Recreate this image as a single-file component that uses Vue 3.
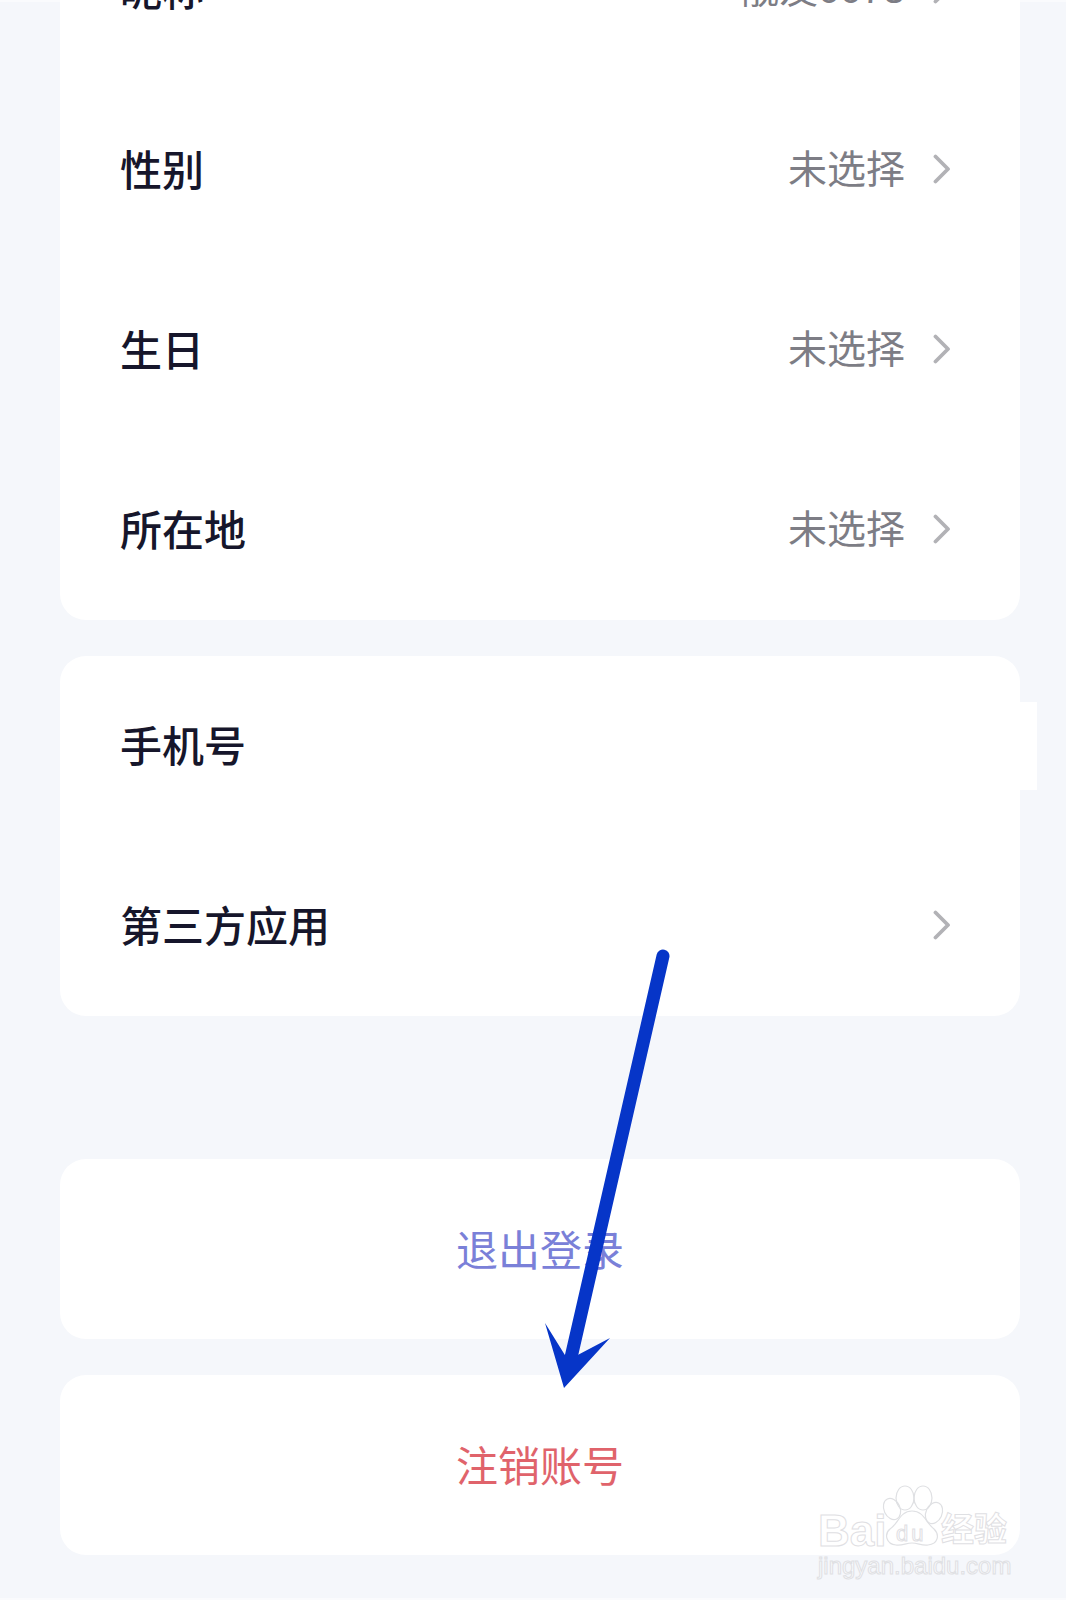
<template>
  <div class="page">
    <section class="card card--first">
      <div v-for="row in profileRows" :key="row.label" class="row">
        <span class="row-label">{{ row.label }}</span>
        <span class="row-value">{{ row.value }}</span>
        <svg class="chevron" width="18" height="30" viewBox="0 0 18 30">
          <path d="M2.5 2.5 15 15 2.5 27.5" />
        </svg>
      </div>
    </section>

    <section class="card card--accounts">
      <div class="row">
        <span class="row-label">手机号</span>
      </div>
      <div class="row">
        <span class="row-label">第三方应用</span>
        <svg class="chevron" width="18" height="30" viewBox="0 0 18 30">
          <path d="M2.5 2.5 15 15 2.5 27.5" />
        </svg>
      </div>
      <div class="tab"></div>
    </section>

    <section class="card card--action card--logout">
      <span class="action logout">退出登录</span>
    </section>
    <section class="card card--action">
      <span class="action cancel">注销账号</span>
    </section>

    <svg class="arrow" width="1066" height="1600" viewBox="0 0 1066 1600">
      <path d="M663 956 570 1362" class="arrow-line" />
      <path d="M545 1323 564 1388 610 1338 572 1358 568 1360Z" class="arrow-head" />
    </svg>

    <div class="watermark">
      <svg class="paw" width="200" height="70" viewBox="0 0 200 70">
        <ellipse cx="74" cy="25" rx="8" ry="11" transform="rotate(-25 74 25)" />
        <ellipse cx="87" cy="14" rx="9" ry="12" />
        <ellipse cx="105" cy="14" rx="9" ry="12" />
        <ellipse cx="116" cy="29" rx="8" ry="11" transform="rotate(25 116 29)" />
        <path d="M78 61C68 60 66 50 72 45 80 40 82 27 94 27 106 27 108 39 116 45 122 51 120 60 110 61 104 62 100 59 94 59 88 59 84 62 78 61Z" />
      </svg>
      <div class="wm-bai">Bai</div>
      <div class="wm-du">du</div>
      <div class="wm-jy">经验</div>
      <div class="wm-url">jingyan.baidu.com</div>
    </div>
  </div>
</template>

<script setup>
const profileRows = [
  { label: '昵称', value: '靓友0073' },
  { label: '性别', value: '未选择' },
  { label: '生日', value: '未选择' },
  { label: '所在地', value: '未选择' }
];
</script>

<style>
html, body { margin: 0; background: #f5f7fb; }
</style>

<style scoped>
.page {
  position: relative;
  width: 1066px;
  height: 1600px;
  overflow: hidden;
  background: #f5f7fb;
  box-shadow: inset 0 2px 0 #fafbfd, inset 0 -2px 0 #fafbfd;
  padding: 0 46px 0 60px;
  box-sizing: border-box;
  font-family: "Liberation Sans", "Noto Sans CJK SC", sans-serif;
}
.card {
  position: relative;
  background: #fff;
  border-radius: 26px;
  margin-bottom: 36px;
}
.card--first { margin-top: -100px; }
.card--accounts { margin-bottom: 143px; }
.card--logout { margin-bottom: 36px; }
.card--action {
  height: 180px;
  display: flex;
  align-items: center;
  justify-content: center;
  padding-bottom: 4px;
  box-sizing: border-box;
}

.row {
  height: 180px;
  display: flex;
  align-items: center;
  padding: 0 68px 0 60px;
  box-sizing: border-box;
}
.row-label {
  flex: 1;
  font-size: 42px;
  font-weight: 500;
  color: #16162b;
  margin-top: -6px;
}
.row-value {
  font-size: 39px;
  color: #7d7d85;
  margin-right: 29px;
  margin-top: -8px;
}
.chevron {
  flex: none;
  margin-top: -3px;
  margin-left: -1px;
  margin-right: 1px;
}
.chevron path {
  fill: none;
  stroke: #b2b2b6;
  stroke-width: 3.8;
  stroke-linecap: round;
  stroke-linejoin: round;
}

.tab {
  position: absolute;
  right: -17px;
  top: 46px;
  width: 17px;
  height: 88px;
  background: #fff;
}

.action { font-size: 42px; }
.logout { color: #7a80d8; }
.cancel { color: #e0636b; }

.arrow {
  position: absolute;
  left: 0;
  top: 0;
  pointer-events: none;
}
.arrow-line {
  stroke: #0635c8;
  stroke-width: 13;
  stroke-linecap: round;
  fill: none;
}
.arrow-head { fill: #0635c8; }

.watermark {
  position: absolute;
  left: 818px;
  top: 1484px;
  width: 200px;
  height: 100px;
  color: rgba(255, 255, 255, .5);
  -webkit-text-stroke: 1px #dfe0e3;
  font-weight: 700;
  white-space: nowrap;
}
.paw {
  position: absolute;
  left: 0;
  top: 0;
}
.paw ellipse, .paw path {
  fill: none;
  stroke: #dfe0e3;
  stroke-width: 1.2;
}
.wm-bai {
  position: absolute;
  left: 0;
  top: 22px;
  font-size: 44px;
  line-height: 50px;
}
.wm-du {
  position: absolute;
  left: 78px;
  top: 38px;
  font-size: 22px;
  line-height: 24px;
  letter-spacing: 3px;
  font-weight: 400;
}
.wm-jy {
  position: absolute;
  left: 123px;
  top: 27px;
  font-size: 33px;
  line-height: 38px;
}
.wm-url {
  position: absolute;
  left: 0;
  top: 68px;
  font-size: 24px;
  line-height: 28px;
  font-weight: 400;
}
</style>
